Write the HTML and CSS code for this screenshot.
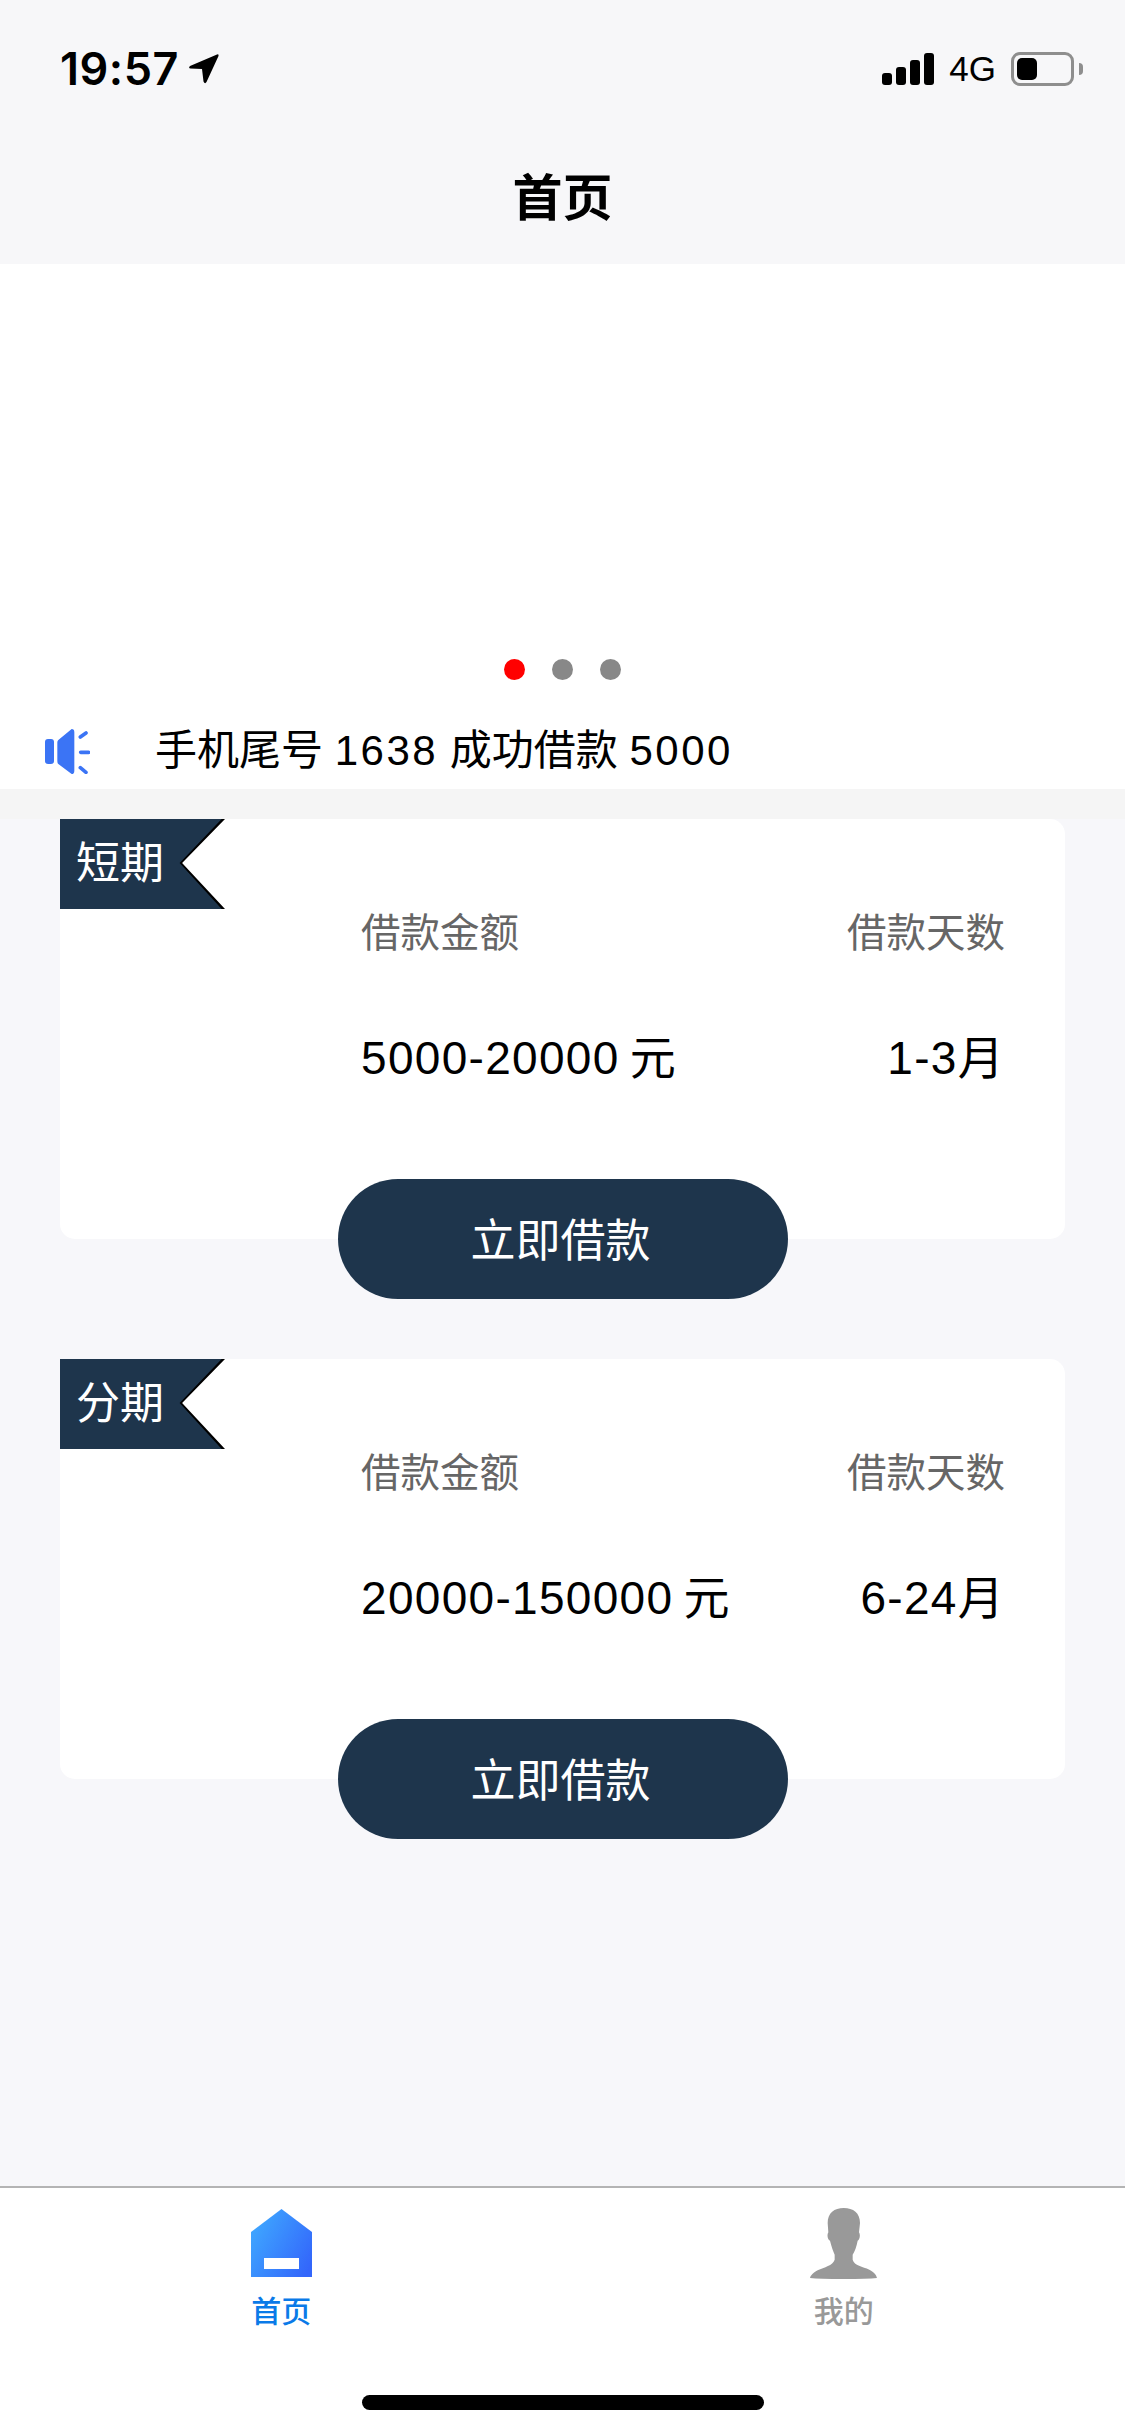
FILE: index.html
```html
<!DOCTYPE html>
<html lang="zh-CN">
<head>
  <meta charset="UTF-8">
  <meta name="viewport" content="width=device-width, initial-scale=1.0">
  <title>首页</title>
  <link rel="stylesheet" href="styles.css">
</head>
<body>
  <div class="page">
    <div class="top">
      <div class="status">
        <div class="status-left">
          <span class="time">19:57</span>
          <svg class="arrow" viewBox="0 0 32 32"><path d="M29 1.500L2 13Q0 15 2.500 15.500L14 16L15.500 28.500Q17 31.500 18.500 29L30.500 3Q31 .5 29 1.500Z"/></svg>
        </div>
        <div class="status-right">
          <div class="signal">
            <span class="bar bar1"></span>
            <span class="bar bar2"></span>
            <span class="bar bar3"></span>
            <span class="bar bar4"></span>
          </div>
          <span class="net">4G</span>
          <div class="battery"><span class="battery-fill"></span></div>
          <span class="battery-nub"></span>
        </div>
      </div>
      <h1 class="nav-title">首页</h1>
    </div>

    <div class="banner">
      <div class="dots">
        <span class="dot dot-on"></span>
        <span class="dot"></span>
        <span class="dot"></span>
      </div>
    </div>

    <div class="notice">
      <svg class="speaker" viewBox="45 55 135 135">
        <rect x="45" y="85" width="27" height="75" rx="9"/>
        <path d="M125 55Q133 55 133 65L133 180Q133 190 125 190L85 160Q82 158 82 152L82 95Q82 90 85 88Z"/>
        <path class="speaker-line" d="M151 79L168 67M152 125L176 125M151 171L168 185"/>
      </svg>
      <span class="notice-text">手机尾号 <span class="num">1638</span> 成功借款 <span class="num">5000</span></span>
    </div>

    <div class="strip"></div>

    <div class="loan">
      <div class="card">
        <div class="ribbon"><span class="ribbon-text">短期</span></div>
        <div class="row row-label">
          <span>借款金额</span>
          <span>借款天数</span>
        </div>
        <div class="row row-value">
          <span>5000-20000 元</span>
          <span>1-3月</span>
        </div>
      </div>
      <button class="apply">立即借款</button>
    </div>

    <div class="loan">
      <div class="card">
        <div class="ribbon"><span class="ribbon-text">分期</span></div>
        <div class="row row-label">
          <span>借款金额</span>
          <span>借款天数</span>
        </div>
        <div class="row row-value">
          <span>20000-150000 元</span>
          <span>6-24月</span>
        </div>
      </div>
      <button class="apply">立即借款</button>
    </div>

    <div class="tabbar">
      <div class="tabs">
        <div class="tab tab-on">
          <svg class="tab-icon home" viewBox="0 0 61 68">
            <defs>
              <linearGradient id="homeFill" x1="0" y1="0.2" x2="1" y2="0.8">
                <stop offset="0" stop-color="#3fa9ff"/>
                <stop offset="1" stop-color="#3366fb"/>
              </linearGradient>
            </defs>
            <path fill="url(#homeFill)" d="M30.500 0L61 23L61 68L0 68L0 23Z"/>
            <rect x="13" y="49" width="35" height="11" fill="#fff"/>
          </svg>
          <span class="tab-label">首页</span>
        </div>
        <div class="tab">
          <svg class="tab-icon person" viewBox="92 55 201 213">
            <path d="M193 55C165 55 145 70 145 100L147 128C142 135 145 150 152 153C156 170 162 185 166 195L166 210C160 228 135 232 115 242C100 250 94 258 92 265Q120 268 192 268Q265 268 293 265C291 255 285 248 270 240C250 230 225 228 220 210L220 195C226 185 232 170 235 153C241 150 244 135 239 128L242 100C242 70 222 55 193 55Z"/>
          </svg>
          <span class="tab-label">我的</span>
        </div>
      </div>
      <div class="home-bar"></div>
    </div>
  </div>
</body>
</html>
```

FILE: styles.css
```css
* {
  box-sizing: border-box;
}

body {
  margin: 0;
  font-family: "Liberation Sans", "Noto Sans CJK SC", sans-serif;
  background-color: #f7f7fa;
}

.page {
  width: 1125px;
  height: 2436px;
  display: flex;
  flex-direction: column;
  overflow: hidden;
}

/* status bar + title */
.top {
  height: 264px;
  background-color: #f7f7f9;
}

.status {
  height: 161px;
  padding: 50px 42px 0 60px;
  display: flex;
  justify-content: space-between;
  align-items: flex-start;
}

.status-left {
  display: flex;
  align-items: center;
  gap: 9px;
}

.time {
  font-family: Inter, sans-serif;
  font-size: 45px;
  font-weight: 600;
  line-height: 38px;
  letter-spacing: 0.5px;
  color: #000;
}

.arrow {
  width: 32px;
  height: 32px;
  fill: #000;
}

.status-right {
  display: flex;
  align-items: center;
  padding-top: 2px;
}

.signal {
  display: flex;
  align-items: flex-end;
  gap: 4px;
  height: 32px;
}

.bar {
  width: 10px;
  background-color: #000;
  border-radius: 3px;
}

.bar1 { height: 12px; }
.bar2 { height: 18px; }
.bar3 { height: 25px; }
.bar4 { height: 32px; }

.net {
  font-family: "Liberation Sans", sans-serif;
  font-size: 35px;
  line-height: 34px;
  color: #000;
  margin-left: 15px;
  margin-right: 15px;
}

.battery {
  width: 63px;
  height: 34px;
  padding: 3px;
  border: 3px solid #8e8e8e;
  border-radius: 9px;
}

.battery-fill {
  display: block;
  width: 20px;
  height: 100%;
  background-color: #000;
  border-radius: 5px;
}

.battery-nub {
  width: 4px;
  height: 12px;
  margin-left: 5px;
  background-color: #8e8e8e;
  border-radius: 0 6px 6px 0;
}

.nav-title {
  margin: 0;
  text-align: center;
  font-size: 50px;
  font-weight: 700;
  line-height: 76px;
  color: #000;
}

/* banner */
.banner {
  height: 454px;
  background-color: #fff;
  padding-top: 395px;
}

.dots {
  display: flex;
  justify-content: center;
  gap: 27px;
}

.dot {
  width: 21px;
  height: 21px;
  border-radius: 50%;
  background-color: #888;
}

.dot-on {
  background-color: #f00;
}

.notice {
  height: 71px;
  background-color: #fff;
  display: flex;
  align-items: center;
  padding: 0 0 0 45px;
}

.speaker {
  width: 45px;
  height: 45px;
  fill: #3b74f5;
  margin-top: -4px;
}

.speaker-line {
  fill: none;
  stroke: #3b74f5;
  stroke-width: 11;
  stroke-linecap: round;
}

.notice-text {
  margin-left: 65px;
  font-size: 42px;
  line-height: 50px;
  color: #000;
  margin-top: -5px;
}

.num {
  letter-spacing: 2.500px;
}

.strip {
  height: 30px;
  background-color: #f5f5f5;
}

/* loan cards */
.loan {
  padding: 0 60px;
  margin-bottom: 60px;
}

.card {
  position: relative;
  height: 420px;
  padding: 89px 60px 0 301px;
  background-color: #fff;
  border-radius: 15px;
}

.ribbon {
  position: absolute;
  top: 0;
  left: 0;
  width: 165px;
  height: 90px;
  background-color: #000;
  border-top-left-radius: 15px;
  clip-path: polygon(0 0, 100% 0, 74% 49%, 100% 100%, 0 100%);
}

.ribbon::before {
  content: "";
  position: absolute;
  top: 0;
  left: 0;
  width: 165px;
  height: 90px;
  background-color: #1e354c;
  clip-path: polygon(0 0, 98% 0, 72.500% 49%, 98% 100%, 0 100%);
}

.ribbon-text {
  position: relative;
  display: block;
  padding: 20px 0 0 16px;
  font-size: 44px;
  line-height: 50px;
  color: #fff;
}

.row {
  display: flex;
  justify-content: space-between;
}

.row-label {
  font-size: 39.500px;
  line-height: 50px;
  color: #666;
}

.row-value {
  margin-top: 75px;
  font-size: 46px;
  line-height: 50px;
  letter-spacing: 1.300px;
  word-spacing: -4px;
  color: #000;
}

.apply {
  display: block;
  width: 450px;
  height: 120px;
  margin: -60px auto 0;
  position: relative;
  padding: 0 4px 4px 0;
  border: none;
  border-radius: 60px;
  background-color: #1e354c;
  color: #fff;
  font-family: inherit;
  font-size: 45px;
}

/* bottom tabs */
.tabbar {
  margin-top: auto;
  height: 250px;
  background-color: #fff;
  border-top: 2px solid #b4b4b4;
  display: flex;
  flex-direction: column;
}

.tabs {
  display: flex;
  padding-top: 20px;
}

.tab {
  flex: 1;
  display: flex;
  flex-direction: column;
  align-items: center;
}

.tab-icon {
  display: block;
}

.home {
  width: 61px;
  height: 68px;
  margin-top: 1px;
  margin-bottom: 19px;
}

.person {
  width: 67px;
  height: 71px;
  margin-bottom: 17px;
  fill: #999;
}

.tab-label {
  font-size: 30px;
  line-height: 32px;
  font-weight: 500;
  color: #999;
}

.tab-on .tab-label {
  color: #0a7ae8;
}

.home-bar {
  width: 402px;
  height: 15px;
  margin: 67px auto 0;
  background-color: #000;
  border-radius: 8px;
}
```
